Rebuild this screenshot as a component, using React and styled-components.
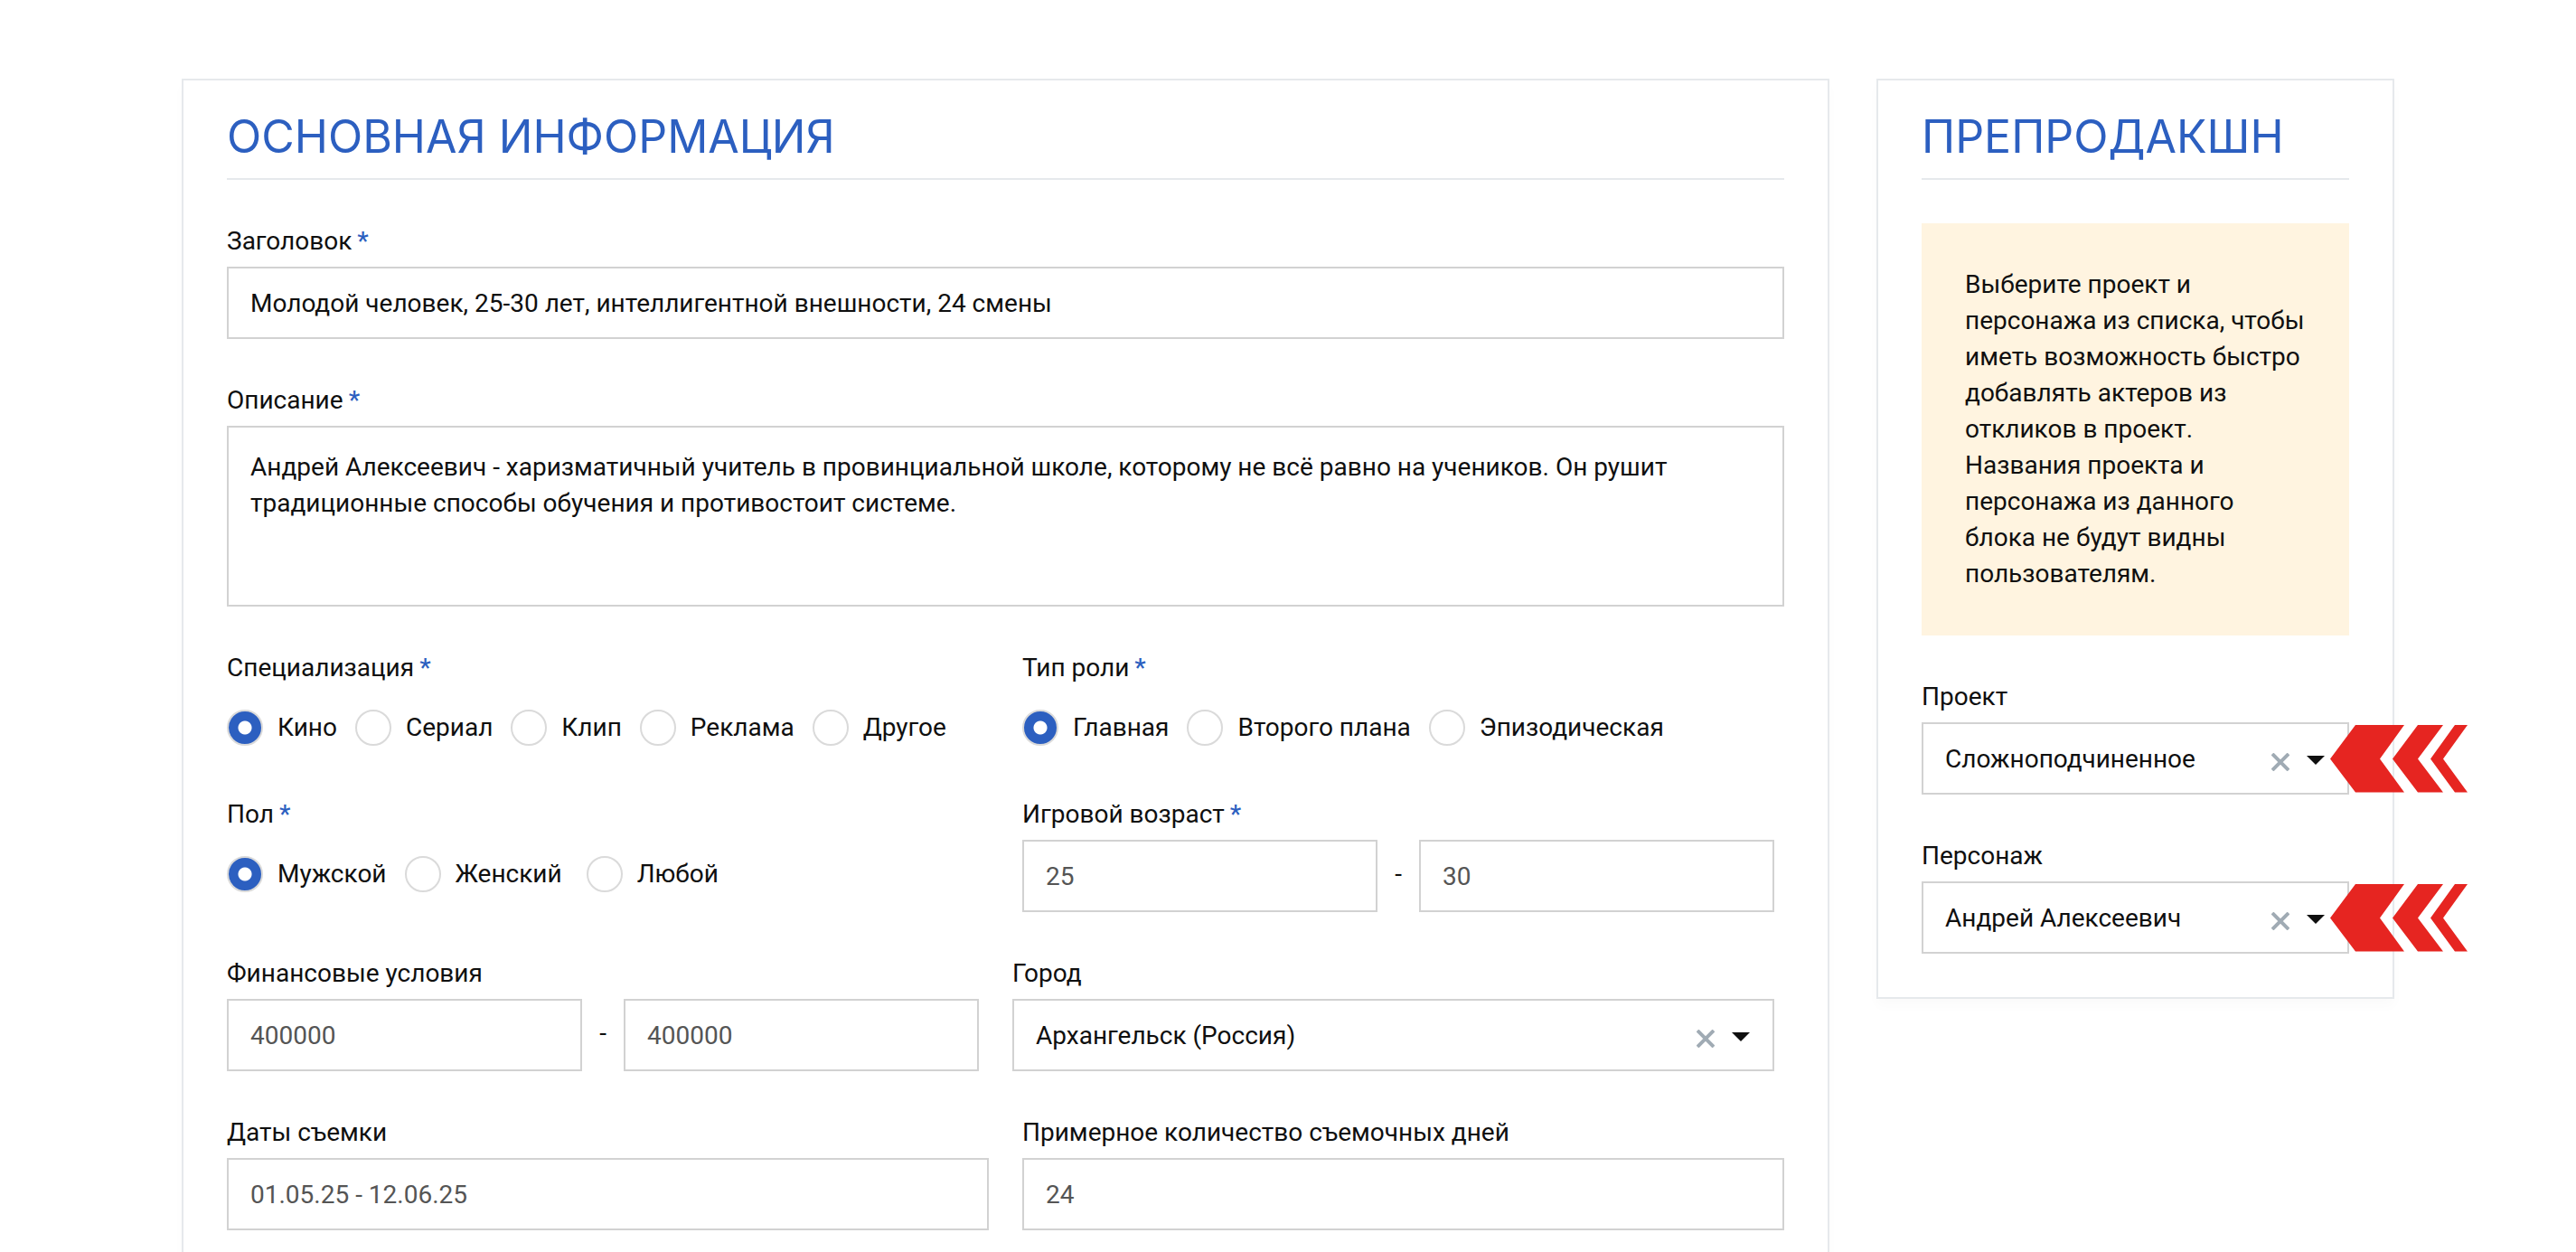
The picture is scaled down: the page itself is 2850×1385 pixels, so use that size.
import React from 'react'
import styled, { createGlobalStyle } from 'styled-components'

const GlobalStyle = createGlobalStyle`
    *, *::before, *::after {
        box-sizing: border-box;
    }
    body {
        margin: 0;
        background-color: #fff;
        color: #0f0f0f;
        font-family: Roboto, 'Liberation Sans', sans-serif;
        font-size: 28px;
        line-height: 40px;
    }
    input, textarea, select, button {
        font: inherit;
        color: inherit;
    }
`;

const PageWrapper = styled.main`
    display: grid;
    grid-template-columns: minmax(0, 1fr) 573px;
    gap: 52px;
    align-items: start;
    max-width: 2448px;
    margin: 0 auto;
    padding-top: 87px;
`;
const Panel = styled.section`
    display: flex;
    flex-direction: column;
    gap: 48px;
    padding: 0 48px 48px;
    border: 2px solid #e6e9ec;
    background-color: #fff;
    box-shadow: 0 8px 12px rgba(0, 0, 0, 0.02);
`;
const PanelTitle = styled.h2`
    margin: 0;
    padding: 32px 0 16px;
    border-bottom: 2px solid #e6e9ec;
    color: #2c5fc0;
    font-family: Inter, sans-serif;
    font-size: 50px;
    font-weight: 400;
    line-height: 60px;
    text-transform: uppercase;
`;
const Row = styled.div`
    display: grid;
    grid-template-columns: 1fr 1fr;
    gap: 37px;
`;
const RowShifted = styled(Row)`
    grid-template-columns: calc(50% - 24px) 1fr;
    padding-right: 11px;
`;
const FieldWrapper = styled.div`
    display: flex;
    flex-direction: column;
    gap: 8px;
    min-width: 0;
    padding-right: ${props => props.$inset ? '11px' : '0'};
`;
const FieldGroup = styled.fieldset`
    min-width: 0;
    margin: 0;
    padding: 0;
    border: 0;
`;
const Label = styled.label`
    display: block;
`;
const Legend = styled.legend`
    padding: 0;
`;
const Required = styled.span`
    margin-left: 6px;
    color: #2c5fc0;
    font-weight: 500;
`;
const Input = styled.input`
    width: 100%;
    min-width: 0;
    height: 80px;
    padding: 0 24px;
    border: 2px solid #d2d2d2;
    border-radius: 0;
    background-color: #fff;
    color: ${props => props.$muted ? '#555' : '#0f0f0f'};
    outline: none;
`;
const Textarea = styled.textarea`
    display: block;
    width: 100%;
    height: 200px;
    padding: 24px;
    border: 2px solid #d2d2d2;
    border-radius: 0;
    resize: none;
    outline: none;
`;
const RangeWrapper = styled.div`
    display: grid;
    grid-template-columns: 1fr 46px 1fr;
    align-items: center;
`;
const RangeDash = styled.span`
    padding-bottom: 4px;
    text-align: center;
`;
const RadioList = styled.div`
    display: flex;
    flex-wrap: wrap;
    gap: 20px;
    padding: 26px 0 8px;
`;
const RadioLabel = styled.label`
    display: flex;
    align-items: center;
    gap: 16px;
    white-space: pre;
`;
const Radio = styled.input`
    appearance: none;
    width: 40px;
    height: 40px;
    margin: 0;
    border: 2px solid #dadada;
    border-radius: 50%;
    background-color: #fff;

    &:checked {
        background: radial-gradient(circle, #fff 7px, #2c5fc0 8px);
    }
`;
const SelectWrapper = styled.div`
    position: relative;
`;
const SelectBox = styled.select`
    appearance: none;
    display: block;
    width: 100%;
    height: 80px;
    padding: 2px 96px 0 24px;
    border: 2px solid #d2d2d2;
    border-radius: 0;
    background-color: #fff;
    outline: none;
`;
const SelectIcons = styled.div`
    position: absolute;
    top: 0;
    right: 27px;
    height: 80px;
    padding-top: 4px;
    display: flex;
    align-items: center;
    gap: 19px;
    pointer-events: none;
`;
const ClearButton = styled.button`
    display: flex;
    padding: 4px 0 0;
    border: 0;
    background: none;
    pointer-events: auto;
    cursor: pointer;
`;
const ArrowMark = styled.svg`
    position: absolute;
    top: 3px;
    left: calc(100% - 21px);
    pointer-events: none;
`;
const Note = styled.p`
    margin: 0;
    padding: 48px;
    background-color: #fff4e0;
`;

const Field = ({ id, label, required, inset, children }) => (
    <FieldWrapper $inset={inset}>
        <Label htmlFor={id}>
            {label}{required && <Required>*</Required>}
        </Label>
        {children}
    </FieldWrapper>
)

const Range = ({ id, label, from, to }) => (
    <RangeWrapper>
        <Input id={id} $muted defaultValue={from} />
        <RangeDash>-</RangeDash>
        <Input aria-label={`${label}: до`} $muted defaultValue={to} />
    </RangeWrapper>
)

const RadioGroup = ({ name, label, options }) => (
    <FieldGroup>
        <Legend>{label}<Required>*</Required></Legend>
        <RadioList>
            {options.map((option, index) => (
                <RadioLabel key={option}>
                    <Radio type='radio' name={name} defaultChecked={index === 0} />
                    {option}
                </RadioLabel>
            ))}
        </RadioList>
    </FieldGroup>
)

const Arrows = () => (
    <ArrowMark width='154' height='75' viewBox='0 0 154 75' fill='#e62521' aria-hidden='true'>
        <path d='M0 37.5L28 0H82L55 37.5L82 74.5H28Z' />
        <path d='M69 37.5L97 0H125L97 37.5L125 74.5H97Z' />
        <path d='M111 37.5L138 0H152L125 37.5L152 74.5H138Z' />
    </ArrowMark>
)

const Select = ({ id, value, marked }) => (
    <SelectWrapper>
        <SelectBox id={id} defaultValue={value}>
            <option>{value}</option>
        </SelectBox>
        <SelectIcons>
            <ClearButton type='button' aria-label='Очистить'>
                <svg width='20' height='20' viewBox='0 0 20 20' stroke='#a0abb4' strokeWidth='4'>
                    <path d='M1 1L19 19M19 1L1 19' />
                </svg>
            </ClearButton>
            <svg width='20' height='10' viewBox='0 0 20 10' fill='#0f0f0f' aria-hidden='true'>
                <path d='M0 0H20L10 10Z' />
            </svg>
        </SelectIcons>
        {marked && <Arrows />}
    </SelectWrapper>
)

const App = () => {
  return (
    <>
        <GlobalStyle />
        <PageWrapper>
            <Panel>
                <PanelTitle>Основная информация</PanelTitle>

                <Field id='title' label='Заголовок' required>
                    <Input id='title' defaultValue='Молодой человек, 25-30 лет, интеллигентной внешности, 24 смены' />
                </Field>

                <Field id='description' label='Описание' required>
                    <Textarea
                        id='description'
                        defaultValue='Андрей Алексеевич - харизматичный учитель в провинциальной школе, которому не всё равно на учеников. Он рушит традиционные способы обучения и противостоит системе.'
                    />
                </Field>

                <Row>
                    <RadioGroup
                        name='specialization'
                        label='Специализация'
                        options={['Кино', 'Сериал', 'Клип', 'Реклама', 'Другое']}
                    />
                    <RadioGroup
                        name='role'
                        label='Тип роли'
                        options={['Главная', 'Второго плана', 'Эпизодическая']}
                    />
                </Row>

                <Row>
                    <RadioGroup
                        name='gender'
                        label='Пол'
                        options={['Мужской', 'Женский ', 'Любой']}
                    />
                    <Field id='age' label='Игровой возраст' required inset>
                        <Range id='age' label='Игровой возраст' from='25' to='30' />
                    </Field>
                </Row>

                <RowShifted>
                    <Field id='fee' label='Финансовые условия'>
                        <Range id='fee' label='Финансовые условия' from='400000' to='400000' />
                    </Field>
                    <Field id='city' label='Город'>
                        <Select id='city' value='Архангельск (Россия)' />
                    </Field>
                </RowShifted>

                <Row>
                    <Field id='dates' label='Даты съемки'>
                        <Input id='dates' $muted defaultValue='01.05.25 - 12.06.25' />
                    </Field>
                    <Field id='days' label='Примерное количество съемочных дней'>
                        <Input id='days' $muted defaultValue='24' />
                    </Field>
                </Row>
            </Panel>

            <Panel>
                <PanelTitle>Препродакшн</PanelTitle>
                <Note>
                    Выберите проект и персонажа из списка, чтобы иметь возможность быстро
                    добавлять актеров из откликов в проект. Названия проекта и персонажа
                    из данного блока не будут видны пользователям.
                </Note>
                <Field id='project' label='Проект'>
                    <Select id='project' value='Сложноподчиненное' marked />
                </Field>
                <Field id='character' label='Персонаж'>
                    <Select id='character' value='Андрей Алексеевич' marked />
                </Field>
            </Panel>
        </PageWrapper>
    </>
  )
}

export default App
